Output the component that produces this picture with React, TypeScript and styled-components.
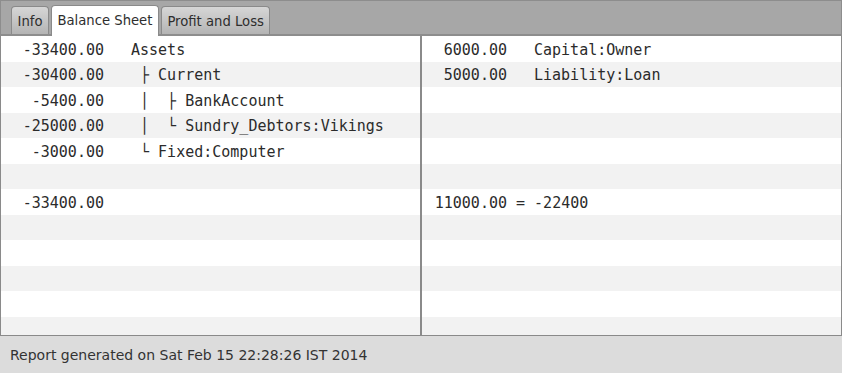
import React from 'react'
import styled, { createGlobalStyle } from 'styled-components'

type Entry = { amount: string; name?: string }

const assets: Entry[] = [
  { amount: '-33400.00', name: 'Assets' },
  { amount: '-30400.00', name: ' ├ Current' },
  { amount: '-5400.00', name: ' │  ├ BankAccount' },
  { amount: '-25000.00', name: ' │  └ Sundry_Debtors:Vikings' },
  { amount: '-3000.00', name: ' └ Fixed:Computer' },
  { amount: '' },
  { amount: '-33400.00' },
]

const liabilities: Entry[] = [
  { amount: '6000.00', name: 'Capital:Owner' },
  { amount: '5000.00', name: 'Liability:Loan' },
  { amount: '' },
  { amount: '' },
  { amount: '' },
  { amount: '' },
  { amount: '11000.00', name: '= -22400' },
]

const ROWS = 12

const GlobalStyle = createGlobalStyle`
  html, body {
    margin: 0;
    padding: 0;
    background: #dcdcdc;
  }
`

function Panel({ entries, amountWidth, totalInline }: { entries: Entry[]; amountWidth: number; totalInline?: boolean }) {
  const rows = Array.from({ length: ROWS }, (_, i) => entries[i] || { amount: '' })
  return (
    <PanelBox>
      {rows.map((e, i) => (
        <Row key={i} $striped={i % 2 === 1}>
          <Amount $width={amountWidth}>{e.amount}</Amount>
          {e.name && (totalInline && i === entries.length - 1 ? <span> {e.name}</span> : <Name>{e.name}</Name>)}
        </Row>
      ))}
    </PanelBox>
  )
}

export default function App() {
  return (
    <Page>
      <GlobalStyle />
      <TabBar>
        <Tab>Info</Tab>
        <Tab $active>Balance Sheet</Tab>
        <Tab>Profit and Loss</Tab>
      </TabBar>
      <Content>
        <Panel entries={assets} amountWidth={103} />
        <Divider />
        <Panel entries={liabilities} amountWidth={85} totalInline />
      </Content>
      <StatusBar>Report generated on Sat Feb 15 22:28:26 IST 2014</StatusBar>
    </Page>
  )
}

const Page = styled.div`
  width: 842px;
  height: 373px;
  display: flex;
  flex-direction: column;
  background: #dcdcdc;
  overflow: hidden;
`

const TabBar = styled.div`
  height: 36px;
  box-sizing: border-box;
  display: flex;
  align-items: flex-end;
  gap: 2px;
  padding-left: 10px;
  background: #a7a7a7;
  border: 1px solid #8d8d8d;
  border-bottom: 2px solid #8d8d8d;
`

const Tab = styled.div<{ $active?: boolean }>`
  box-sizing: border-box;
  height: ${({ $active }) => ($active ? '31px' : '28px')};
  margin-bottom: ${({ $active }) => ($active ? '-2px' : '0')};
  padding: ${({ $active }) => ($active ? '0 5.5px 2px' : '1px 5.5px 0')};
  display: flex;
  align-items: center;
  font-family: 'DejaVu Sans', sans-serif;
  font-size: 13.2px;
  color: #2e2e2e;
  border: 1px solid #8a8a8a;
  border-bottom: none;
  border-radius: 4px 4px 0 0;
  background: ${({ $active }) => ($active ? '#ffffff' : 'linear-gradient(#d6d6d6, #b4b4b4)')};
`

const Content = styled.div`
  height: 299px;
  display: flex;
  border-left: 1px solid #8a8a8a;
  border-right: 1px solid #8a8a8a;
  border-bottom: 1px solid #8a8a8a;
  background: #ffffff;
  overflow: hidden;
`

const PanelBox = styled.div`
  flex: 1;
  display: flex;
  flex-direction: column;
  min-width: 0;
`

const Divider = styled.div`
  width: 2px;
  background: #8a8a8a;
`

const Row = styled.div<{ $striped: boolean }>`
  height: 25.5px;
  box-sizing: border-box;
  padding-top: 2px;
  flex-shrink: 0;
  display: flex;
  align-items: center;
  background: ${({ $striped }) => ($striped ? '#f2f2f2' : '#ffffff')};
  font-family: 'DejaVu Sans Mono', monospace;
  font-size: 15px;
  color: #2b2b2b;
  white-space: pre;
`

const Amount = styled.span<{ $width: number }>`
  width: ${({ $width }) => $width}px;
  text-align: right;
  flex-shrink: 0;
`

const Name = styled.span`
  margin-left: 27px;
`

const StatusBar = styled.div`
  flex: 1;
  display: flex;
  align-items: center;
  padding-left: 10px;
  font-family: 'DejaVu Sans', sans-serif;
  font-size: 14px;
  color: #333333;
`
